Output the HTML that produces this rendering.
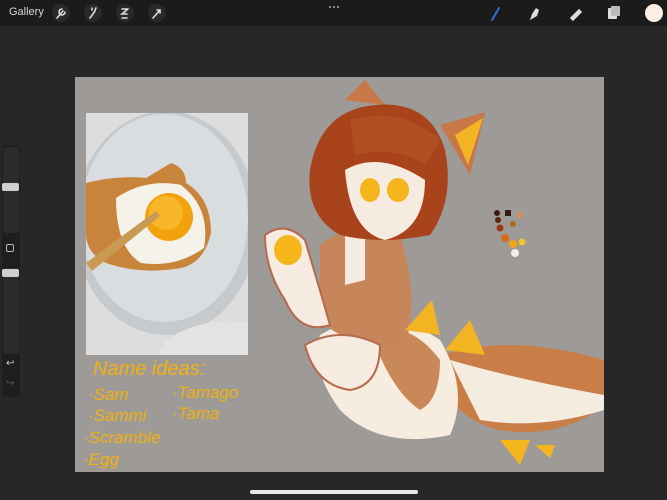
<!DOCTYPE html>
<html><head><meta charset="utf-8"><style>
*{margin:0;padding:0;box-sizing:border-box}
body{width:667px;height:500px;overflow:hidden;background:#272727;position:relative;font-family:"Liberation Sans",sans-serif}
.top{position:absolute;left:0;top:0;width:667px;height:26px;background:#1b1b1b}
.abs{position:absolute}
.hw{position:absolute;color:#f2b10e;font-family:"Liberation Sans",sans-serif;font-size:17px;font-style:italic;white-space:nowrap}
</style></head><body>
<div class="top"></div>
<div class="abs" style="left:9px;top:6px;color:#d8d8d8;font-size:11px">Gallery</div>
<svg class="abs" style="left:0;top:0" width="667" height="26">
<g fill="#2a2a2a"><circle cx="61" cy="13" r="9"/><circle cx="93" cy="13" r="9"/><circle cx="125" cy="13" r="9"/><circle cx="157" cy="13" r="9"/></g>
<g stroke="#ddd" stroke-width="1.6" fill="none" stroke-linecap="round">
<path d="M57 18l6-7M62 9a3 3 0 1 0 3 3"/>
<path d="M90 18l5-7M92 8v2M96 8l-1 2"/>
<path d="M122 9h6M128 9l-6 5h5M122 18h5"/>
<path d="M153 18l7-8M157 10h3v3"/>
<path d="M492 20l7-12" stroke="#2f6fe0" stroke-width="2"/>
<path d="M571 18l8-8l2 2l-8 8z" fill="#ddd"/>
</g>
<path d="M530 20l2-6l4-6l3 2l-2 6z" fill="#ddd"/>
<rect x="608" y="8" width="9" height="11" rx="1" fill="#ddd"/><rect x="611" y="6" width="9" height="10" rx="1" fill="#bbb"/>
<circle cx="654" cy="13" r="9" fill="#fbeee4"/>
<g fill="#aaa"><circle cx="330" cy="7" r="1"/><circle cx="334" cy="7" r="1"/><circle cx="338" cy="7" r="1"/></g>
</svg>
<div class="abs" style="left:2px;top:145px;width:18px;height:252px;background:#1e1e1e;border-radius:4px"></div>
<div class="abs" style="left:3px;top:147px;width:16px;height:86px;background:#2b2b2b;border-radius:3px"></div>
<div class="abs" style="left:3px;top:268px;width:16px;height:86px;background:#2b2b2b;border-radius:3px"></div>
<div class="abs" style="left:2px;top:183px;width:17px;height:8px;background:#cfcfcf;border-radius:2px"></div>
<div class="abs" style="left:2px;top:269px;width:17px;height:8px;background:#cfcfcf;border-radius:2px"></div>
<div class="abs" style="left:6px;top:244px;width:8px;height:8px;border:1px solid #bbb;border-radius:2px"></div>
<div class="abs" style="left:6px;top:358px;color:#ccc;font-size:10px">↩</div>
<div class="abs" style="left:6px;top:378px;color:#555;font-size:10px">↪</div>
<div class="abs" style="left:75px;top:77px;width:529px;height:395px;background:#9e9a97"></div>
<svg class="abs" style="left:86px;top:113px" width="162" height="242">
<rect width="162" height="242" fill="#dddddd"/>
<ellipse cx="80" cy="110" rx="92" ry="112" fill="#c6cacd"/>
<ellipse cx="78" cy="105" rx="84" ry="104" fill="#dadde0"/>
<ellipse cx="145" cy="250" rx="75" ry="42" fill="#e3e3e3"/>
<path d="M0 70 Q30 62 60 65 L85 50 Q100 55 100 70 Q125 85 125 120 Q118 150 95 155 Q55 162 20 150 Q0 140 0 120z" fill="#c8843a"/>
<path d="M30 85 Q60 65 95 72 Q125 95 118 135 Q90 155 55 150 Q30 135 30 85z" fill="#f5f2ea"/>
<circle cx="83" cy="104" r="24" fill="#f2a20c"/>
<circle cx="80" cy="100" r="17" fill="#f9b62a"/>
<path d="M0 150 L70 98 L74 103 L6 158z" fill="#c99b52"/>
</svg>
<div class="hw" style="left:93px;top:358px;font-size:20px">Name ideas:</div>
<div class="hw" style="left:88px;top:385px">·Sam</div>
<div class="hw" style="left:172px;top:383px">·Tamago</div>
<div class="hw" style="left:88px;top:406px">·Sammi</div>
<div class="hw" style="left:172px;top:404px">·Tama</div>
<div class="hw" style="left:83px;top:428px">·Scramble</div>
<div class="hw" style="left:83px;top:450px">·Egg</div>
<svg class="abs" style="left:0;top:0" width="667" height="500">
<path d="M430 360 Q500 330 604 360 L604 405 Q560 440 500 430 Q450 420 430 360z" fill="#c97d47"/>
<path d="M450 360 Q520 380 604 395 L604 410 Q540 430 480 420z" fill="#f5ece0"/>
<path d="M445 350 L470 320 L485 355z" fill="#f3b423"/>
<path d="M320 335 Q380 300 440 340 Q470 390 450 435 Q380 450 340 410 Q310 370 320 335z" fill="#f7ece0"/>
<path d="M370 330 Q410 320 440 360 Q440 400 420 410 Q390 390 370 330z" fill="#c88858"/>
<path d="M320 245 Q350 220 400 235 Q420 300 405 345 Q350 350 320 320z" fill="#c7865a"/>
<path d="M345 235 L365 230 L365 280 L345 285z" fill="#f6ebe0"/>
<path d="M265 235 Q285 220 305 240 Q320 290 330 325 Q300 335 285 300 Q265 270 265 235z" fill="#f6ebe0" stroke="#b56a4e" stroke-width="2"/>
<ellipse cx="288" cy="250" rx="14" ry="15" fill="#f5b51c"/>
<path d="M305 345 Q340 325 380 345 Q380 385 350 390 Q315 385 305 345z" fill="#f6ebe0" stroke="#b56a4e" stroke-width="2"/>
<path d="M405 330 L432 300 L440 335z" fill="#f3b423"/>
<path d="M345 100 L365 80 L385 105z M440 125 L485 112 L470 175z" fill="#c87848"/>
<path d="M455 135 L483 118 L468 165z" fill="#f3b423"/>
<path d="M310 170 Q320 110 375 105 Q430 100 445 150 Q455 200 430 235 Q380 245 340 235 Q305 215 310 170z" fill="#a9431c"/>
<path d="M345 170 Q380 150 425 180 Q425 230 385 240 Q350 232 345 170z" fill="#f6ebe0"/>
<ellipse cx="370" cy="190" rx="10" ry="12" fill="#f5b51c"/>
<ellipse cx="398" cy="190" rx="11" ry="12" fill="#f5b51c"/>
<path d="M350 120 Q400 105 440 140 L425 165 Q395 145 355 155z" fill="#b04f22"/>
<path d="M505 210h6v6h-6z" fill="#3a1a10"/><circle cx="497" cy="213" r="3" fill="#3a1a10"/><circle cx="498" cy="220" r="3" fill="#5a2210"/>
<circle cx="500" cy="228" r="3.5" fill="#9a3a12"/><circle cx="513" cy="224" r="3" fill="#b06a20"/><circle cx="505" cy="238" r="4" fill="#d86a1a"/>
<circle cx="513" cy="244" r="4" fill="#f3a514"/><circle cx="522" cy="242" r="3.5" fill="#f5c52a"/><circle cx="515" cy="253" r="4" fill="#f3ede6"/>
<circle cx="520" cy="215" r="3" fill="#d8905a"/>
<path d="M500 440 L530 440 L520 465z M535 445 L555 445 L550 458z" fill="#f5b51c"/>
</svg>
<div class="abs" style="left:250px;top:490px;width:168px;height:4px;background:#e8e8e8;border-radius:2px"></div>
</body></html>
